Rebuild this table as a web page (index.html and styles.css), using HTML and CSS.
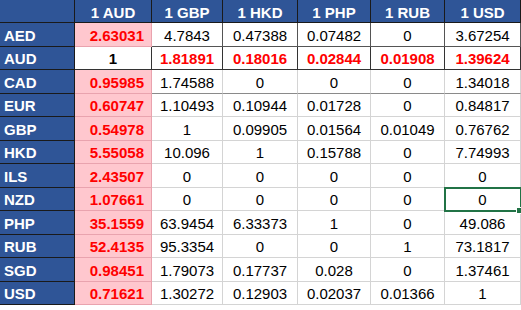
FILE: index.html
```html
<!DOCTYPE html>
<html lang="en">
<head>
    <meta charset="UTF-8">
    <title>Currency Rates</title>
    <link rel="stylesheet" href="styles.css">
</head>
<body>
    <div class="sheet">
        <!-- header -->
        <div class="cell head"></div>
        <div class="cell head">1 AUD</div>
        <div class="cell head">1 GBP</div>
        <div class="cell head">1 HKD</div>
        <div class="cell head">1 PHP</div>
        <div class="cell head">1 RUB</div>
        <div class="cell head">1 USD</div>

        <div class="cell label">AED</div>
        <div class="cell base">2.63031</div>
        <div class="cell dark">4.7843</div>
        <div class="cell dark">0.47388</div>
        <div class="cell dark">0.07482</div>
        <div class="cell dark">0</div>
        <div class="cell dark">3.67254</div>

        <div class="cell label">AUD</div>
        <div class="cell one">1</div>
        <div class="cell dark hot">1.81891</div>
        <div class="cell dark hot">0.18016</div>
        <div class="cell dark hot">0.02844</div>
        <div class="cell dark hot">0.01908</div>
        <div class="cell dark hot">1.39624</div>

        <div class="cell label">CAD</div>
        <div class="cell base">0.95985</div>
        <div class="cell mid">1.74588</div>
        <div class="cell mid">0</div>
        <div class="cell mid">0</div>
        <div class="cell mid">0</div>
        <div class="cell mid">1.34018</div>

        <div class="cell label">EUR</div>
        <div class="cell base">0.60747</div>
        <div class="cell">1.10493</div>
        <div class="cell">0.10944</div>
        <div class="cell">0.01728</div>
        <div class="cell">0</div>
        <div class="cell">0.84817</div>

        <div class="cell label">GBP</div>
        <div class="cell base">0.54978</div>
        <div class="cell">1</div>
        <div class="cell">0.09905</div>
        <div class="cell">0.01564</div>
        <div class="cell">0.01049</div>
        <div class="cell">0.76762</div>

        <div class="cell label">HKD</div>
        <div class="cell base">5.55058</div>
        <div class="cell">10.096</div>
        <div class="cell">1</div>
        <div class="cell">0.15788</div>
        <div class="cell">0</div>
        <div class="cell">7.74993</div>

        <div class="cell label">ILS</div>
        <div class="cell base">2.43507</div>
        <div class="cell">0</div>
        <div class="cell">0</div>
        <div class="cell">0</div>
        <div class="cell">0</div>
        <div class="cell">0</div>

        <div class="cell label">NZD</div>
        <div class="cell base">1.07661</div>
        <div class="cell">0</div>
        <div class="cell">0</div>
        <div class="cell">0</div>
        <div class="cell">0</div>
        <div class="cell selected">0</div>

        <div class="cell label">PHP</div>
        <div class="cell base">35.1559</div>
        <div class="cell">63.9454</div>
        <div class="cell">6.33373</div>
        <div class="cell">1</div>
        <div class="cell">0</div>
        <div class="cell">49.086</div>

        <div class="cell label">RUB</div>
        <div class="cell base">52.4135</div>
        <div class="cell">95.3354</div>
        <div class="cell">0</div>
        <div class="cell">0</div>
        <div class="cell">1</div>
        <div class="cell">73.1817</div>

        <div class="cell label">SGD</div>
        <div class="cell base">0.98451</div>
        <div class="cell">1.79073</div>
        <div class="cell">0.17737</div>
        <div class="cell">0.028</div>
        <div class="cell">0</div>
        <div class="cell">1.37461</div>

        <div class="cell label">USD</div>
        <div class="cell base">0.71621</div>
        <div class="cell">1.30272</div>
        <div class="cell">0.12903</div>
        <div class="cell">0.02037</div>
        <div class="cell">0.01366</div>
        <div class="cell">1</div>
    </div>
</body>
</html>
```

FILE: styles.css
```css
body {
    margin: 0;
    background-color: #fff;
    font-family: "Liberation Sans", Arial, sans-serif;
    font-size: 15px;
    color: #000;
}
.sheet {
    display: grid;
    grid-template-columns: 75px 77px 71px 75px 73px 74px 76px;
    grid-template-rows: 23px repeat(12, 23.5px);
    width: 521px;
}
.cell {
    display: flex;
    align-items: center;
    justify-content: center;
    padding-top: 2px;
    border-right: 1px solid #d4d4d4;
    border-bottom: 1px solid #d4d4d4;
    box-sizing: border-box;
    white-space: nowrap;
    position: relative;
}
.head {
    background-color: #2f5597;
    color: #fff;
    font-weight: bold;
    border-color: #1a1a1a;
}
.label {
    background-color: #2f5597;
    color: #fff;
    font-weight: bold;
    justify-content: flex-start;
    padding-left: 4px;
    border-color: #1a1a1a;
}
.base {
    background-color: #ffc7ce;
    color: #ff0000;
    font-weight: bold;
    justify-content: flex-end;
    padding-right: 7px;
    border-color: #e9a3ae;
}
.one {
    font-weight: bold;
    border-color: #333;
}
.dark {
    border-color: #555;
}
.mid {
    border-bottom-color: #8a8a8a;
}
.hot {
    color: #ff0000;
    font-weight: bold;
    border-color: #333;
}
/* active cell */
.selected {
    outline: 2px solid #217346;
    outline-offset: -1px;
    z-index: 1;
}
.selected::after {
    content: "";
    position: absolute;
    right: -3px;
    bottom: -4px;
    width: 5px;
    height: 5px;
    background-color: #217346;
    border: 1px solid #fff;
}
```
